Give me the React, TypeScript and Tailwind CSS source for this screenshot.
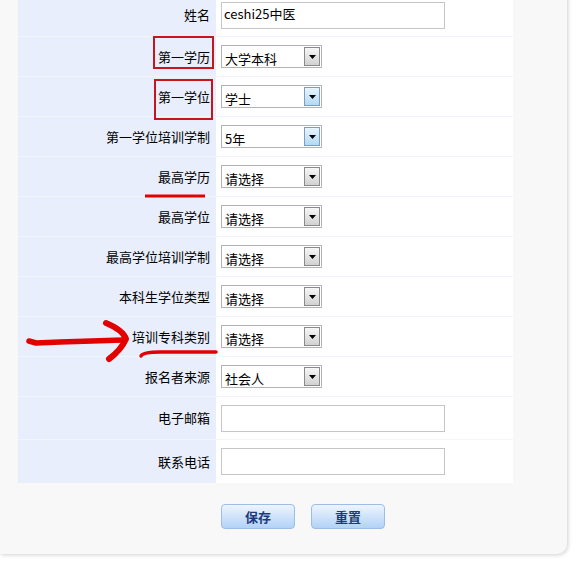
import React from "react";

type Row = {
  label: string;
  kind: "text" | "select";
  value?: string;
  active?: boolean;
};

const rows: Row[] = [
  { label: "姓名", kind: "text", value: "ceshi25中医" },
  { label: "第一学历", kind: "select", value: "大学本科" },
  { label: "第一学位", kind: "select", value: "学士", active: true },
  { label: "第一学位培训学制", kind: "select", value: "5年", active: true },
  { label: "最高学历", kind: "select", value: "请选择" },
  { label: "最高学位", kind: "select", value: "请选择" },
  { label: "最高学位培训学制", kind: "select", value: "请选择" },
  { label: "本科生学位类型", kind: "select", value: "请选择" },
  { label: "培训专科类别", kind: "select", value: "请选择" },
  { label: "报名者来源", kind: "select", value: "社会人" },
  { label: "电子邮箱", kind: "text", value: "" },
  { label: "联系电话", kind: "text", value: "" },
];

// fake select box, old windows style
const SelectBox = ({ value, active }: { value?: string; active?: boolean }) => {
  return (
    <div className="flex h-[23px] w-[101px] border border-[#b3b3b3] bg-white">
      <span className="flex-1 pl-[3px] pt-[5px] text-[13px] leading-[16px] text-black">{value}</span>
      <span
        className={
          active
            ? "m-px flex w-[16px] items-center justify-center border border-[#7d9fbd] bg-gradient-to-b from-[#e9f5fd] to-[#b3d9f3]"
            : "m-px flex w-[16px] items-center justify-center border border-[#8a8a8a] bg-gradient-to-b from-[#f7f7f7] to-[#d2d2d2]"
        }
      >
        <svg width="7" height="4" viewBox="0 0 7 4">
          <path d="M0 0 H7 L3.5 4 Z" fill="#000" />
        </svg>
      </span>
    </div>
  );
};

const TextBox = ({ value }: { value?: string }) => (
  <div className="h-[27px] w-[224px] border border-[#c6c6c6] bg-white pl-[2px] pt-[3px] text-[13px] leading-[16px] text-black">
    {value}
  </div>
);

export default function App() {
  return (
    <div className="relative h-[570px] w-[579px] overflow-hidden bg-white font-['Noto_Sans_CJK_SC','Noto_Sans',sans-serif]">
      <div className="h-[560px] w-[567px] rounded-br-[10px] bg-[#f8f8f8] shadow-[1px_1px_4px_rgba(0,0,0,0.18)]">
        <div className="ml-[18px] mt-[-6px] w-[495px]">
          {rows.map((row, i) => (
            <div
              key={row.label}
              className={
                (row.kind === "text" ? "h-[43px] " : "h-[40px] ") +
                (i < rows.length - 1 ? "border-b border-[#f2f5fb] " : "") +
                "flex"
              }
            >
              <div className="flex w-[198px] items-center justify-end bg-[#e8eefb] pr-[6px] text-[13px] text-black">
                {row.label}
              </div>
              <div className="flex flex-1 items-center bg-white pl-[5px]">
                {row.kind === "select" ? (
                  <SelectBox value={row.value} active={row.active} />
                ) : (
                  <TextBox value={row.value} />
                )}
              </div>
            </div>
          ))}
        </div>
        <div className="ml-[221px] mt-[21px] flex gap-[16px]">
          <button className="h-[25px] w-[74px] rounded-[4px] border border-[#9cbde6] bg-gradient-to-b from-[#eef5ff] to-[#b2d2f6] text-[13px] font-bold text-[#1c3a7c]">
            保存
          </button>
          <button className="h-[25px] w-[74px] rounded-[4px] border border-[#9cbde6] bg-gradient-to-b from-[#eef5ff] to-[#b2d2f6] text-[13px] font-bold text-[#1c3a7c]">
            重置
          </button>
        </div>
      </div>

      {/* red annotations drawn over the form */}
      <svg className="pointer-events-none absolute left-0 top-0" width="579" height="570" viewBox="0 0 579 570">
        <rect x="154" y="37" width="59" height="31" fill="none" stroke="#c8141c" strokeWidth="2" />
        <rect x="155" y="80" width="57" height="39" fill="none" stroke="#c8141c" strokeWidth="2" />
        <path d="M145 196 H205" stroke="#e30000" strokeWidth="3" fill="none" />
        <path d="M29 341 L36 343 L60 342 L123 340" stroke="#e30000" strokeWidth="5.5" fill="none" strokeLinecap="round" strokeLinejoin="round" />
        <path d="M106 323 Q123 330 126 339 Q121 350 109 359" stroke="#e30000" strokeWidth="6" fill="none" strokeLinecap="round" strokeLinejoin="round" />
        <path d="M141 356 Q143 352 160 352 L216 352" stroke="#e30000" strokeWidth="3.5" fill="none" strokeLinecap="round" />
      </svg>
    </div>
  );
}
